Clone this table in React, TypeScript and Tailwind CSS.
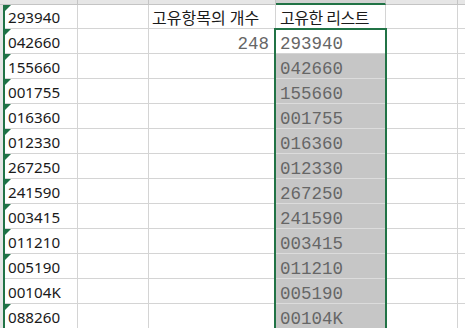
import React from 'react';

const colA = [
  '293940', '042660', '155660', '001755', '016360', '012330', '267250',
  '241590', '003415', '011210', '005190', '00104K', '088260',
];

// D column: header, then unique list (row 2 is the active cell)
const colD = colA.slice(0, 12);

const sans = "font-['Noto_Sans','Noto_Sans_CJK_KR',sans-serif]";
const mono = "font-['Liberation_Mono','Noto_Sans_CJK_KR',monospace]";

const ErrorMark = () => (
  <span className="absolute left-0 top-0 w-0 h-0 border-t-[6px] border-t-[#1e7145] border-r-[6px] border-r-transparent" />
);

const App: React.FC = () => {
  return (
    <div className={`relative w-[465px] h-[328px] overflow-hidden bg-white text-black ${sans}`}>
      {/* column header strip */}
      <div className="flex h-[5px]">
        <div className="w-[5px] bg-[#e6e6e6] border-b border-[#c4c4c4]" />
        <div className="w-[73px] bg-[#e6e6e6] border-r border-b border-[#c4c4c4]" />
        <div className="w-[71px] bg-[#e6e6e6] border-r border-b border-[#c4c4c4]" />
        <div className="w-[127px] bg-[#e6e6e6] border-r border-b border-[#c4c4c4]" />
        <div className="w-[110px] bg-[#d2d2d2] border-r border-[#c4c4c4] border-b-2 border-b-[#217346]" />
        <div className="w-[72px] bg-[#e6e6e6] border-r border-b border-[#c4c4c4]" />
        <div className="flex-1 bg-[#e6e6e6] border-b border-[#c4c4c4]" />
      </div>

      {colA.map((a, i) => {
        const rowH = i === 0 ? 'h-[24px]' : 'h-[25px]';
        const d = i === 0 ? null : colD[i - 1];
        const dGray = i >= 2;
        return (
          <div key={i} className={`flex ${rowH}`}>
            <div className="w-[5px] bg-[#e6e6e6] border-r-2 border-[#217346]" />
            <div className="relative w-[73px] flex items-end pl-[3px] pb-[1px] border-r border-b border-[#d4d4d4] text-[15.2px] leading-[19px] text-[#1a1a1a]">
              {a !== '00104K' && <ErrorMark />}
              {a}
            </div>
            <div className="w-[71px] border-r border-b border-[#d4d4d4]" />
            <div
              className={`w-[127px] flex items-end border-r border-b border-[#d4d4d4] ${
                i === 1 ? 'justify-end pr-[6px]' : 'pl-[3px] pb-[1px]'
              }`}
            >
              {i === 0 && <span className="text-[16px] leading-[18px] text-[#1a1a1a]">고유항목의 개수</span>}
              {i === 1 && (
                <span className={`${mono} text-[17.5px] leading-[18px] text-[#666]`}>248</span>
              )}
            </div>
            <div
              className={`w-[110px] flex items-end pl-[4px] border-r border-b ${
                dGray ? 'bg-[#c6c6c6] border-[#dcdcdc]' : 'border-[#d4d4d4]'
              } ${i === 0 ? 'pb-[1px]' : ''}`}
            >
              {i === 0 ? (
                <span className="text-[16px] leading-[18px] tracking-[-0.5px] text-[#1a1a1a]">고유한 리스트</span>
              ) : (
                <span className={`${mono} text-[17.5px] leading-[18px] text-[#666]`}>{d}</span>
              )}
            </div>
            <div className="w-[72px] border-r border-b border-[#d4d4d4]" />
            <div className="flex-1 border-b border-[#d4d4d4]" />
          </div>
        );
      })}

      {/* selection outline */}
      <div className="absolute left-[274px] top-[28px] w-[113px] h-[310px] border-2 border-[#217346]" />
    </div>
  );
};

export default App;
